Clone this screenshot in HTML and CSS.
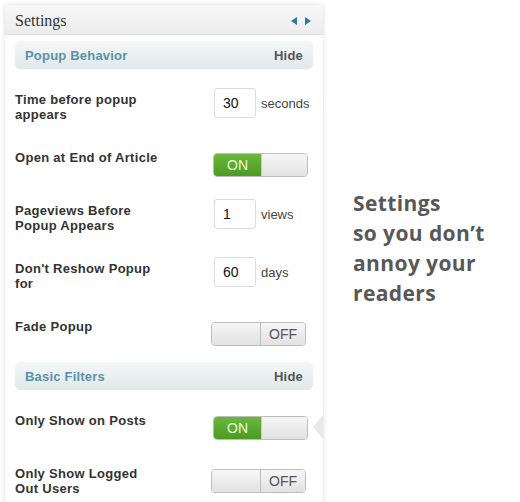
FILE: index.html
```html
<!DOCTYPE html>
<html lang='en'>
<head>
	<meta charset='UTF-8'>
	<title>Settings</title>
	<link rel="stylesheet" href="styles.css">
</head>
<body>
	<div class='page'>
		<div class='panel'>
			<div class='panel-head'>
				<span class='panel-title'>Settings</span>
				<span class='panel-arrows'>
					<svg width='20' height='8' viewBox='0 0 20 8'>
						<polygon points='0,4 6,0 6,8' fill='#2a7ca4'/>
						<polygon points='20,4 14,0 14,8' fill='#2a7ca4'/>
					</svg>
				</span>
			</div>
			<div class='panel-body'>
				<div class='section'>
					<div class='section-head'><span>Popup Behavior</span><span class='hide'>Hide</span></div>
					<div class='row row-input'>
						<div class='label'>Time before popup appears</div>
						<input class='num' type='text' value='30'><span class='unit'>seconds</span>
					</div>
					<div class='row'>
						<div class='label'>Open at End of Article</div>
						<div class='toggle on'><span class='t-on'>ON</span><span class='t-knob'></span></div>
					</div>
					<div class='row row-input'>
						<div class='label'>Pageviews Before Popup Appears</div>
						<input class='num' type='text' value='1'><span class='unit'>views</span>
					</div>
					<div class='row row-input'>
						<div class='label'>Don't Reshow Popup for</div>
						<input class='num' type='text' value='60'><span class='unit'>days</span>
					</div>
					<div class='row'>
						<div class='label'>Fade Popup</div>
						<div class='toggle off'><span class='t-knob'></span><span class='t-off'>OFF</span></div>
					</div>
				</div>
				<div class='section'>
					<div class='section-head'><span>Basic Filters</span><span class='hide'>Hide</span></div>
					<div class='row'>
						<div class='label'>Only Show on Posts</div>
						<div class='toggle on'><span class='t-on'>ON</span><span class='t-knob'></span></div>
						<div class='pointer'></div>
					</div>
					<div class='row'>
						<div class='label'>Only Show Logged Out Users</div>
						<div class='toggle off'><span class='t-knob'></span><span class='t-off'>OFF</span></div>
					</div>
				</div>
			</div>
		</div>
		<div class='blurb'>Settings<br>so you don’t<br>annoy your<br>readers</div>
	</div>
</body>
</html>
```

FILE: styles.css
```css
html, body{
	margin:0;
	background:#fff;
	font-family:"Liberation Sans", Arial, sans-serif;
}
.page{
	display:flex;
	align-items:flex-start;
	height:502px;
	overflow:hidden;
}
.panel{
	width:318px;
	margin:5px 0 0 5px;
	background:#fff;
	border-radius:4px 4px 0 0;
	box-shadow:0 0 5px rgba(0,0,0,.16);
}
.panel-head{
	display:flex;
	align-items:center;
	justify-content:space-between;
	height:29px;
	padding:0 12px 0 10px;
	background:linear-gradient(#f8f8f8, #ececec);
	border-bottom:1px solid #dcdcdc;
	border-radius:4px 4px 0 0;
}
.panel-title{
	font-family:"Liberation Serif", "Times New Roman", serif;
	font-size:16px;
	color:#333;
	padding-top:2px;
}
.panel-arrows{
	display:flex;
	padding-top:2px;
}
.panel-body{
	position:relative;
	padding:6px 10px 0 10px;
}
.section-head{
	display:flex;
	align-items:center;
	justify-content:space-between;
	height:28px;
	padding:0 10px;
	border-radius:5px;
	background:linear-gradient(#f4f7f8, #dfe8eb);
	font-size:13px;
	font-weight:bold;
	letter-spacing:.2px;
	color:#5b92a9;
	margin-bottom:19px;
}
.section-head .hide{
	color:#555;
}
.row{
	position:relative;
	display:flex;
	align-items:flex-start;
	margin-bottom:22px;
}
.row-input{
	min-height:36px;
}
.section .row:last-child{
	margin-bottom:16px;
}
.label{
	width:145px;
	margin-right:54px;
	padding-top:4px;
	font-size:13px;
	font-weight:bold;
	letter-spacing:.3px;
	line-height:15px;
	color:#333;
}
.label + .num{
	margin-top:0;
}
.num{
	box-sizing:border-box;
	width:42px;
	height:30px;
	margin:0;
	padding:0 0 0 8px;
	border:1px solid #dcdcdc;
	border-radius:3px;
	font-family:inherit;
	font-size:14px;
	color:#111;
}
.unit{
	margin:8px 0 0 5px;
	font-size:13px;
	color:#444;
}
.toggle{
	display:flex;
	box-sizing:border-box;
	width:95px;
	height:24px;
	margin-top:7px;
	border:1px solid #bdbdbd;
	border-radius:4px;
	overflow:hidden;
	font-size:14px;
	line-height:22px;
}
.toggle.on{
	margin-left:-1px;
}
.toggle.off{
	margin-left:-3px;
}
.t-on{
	width:47px;
	text-align:center;
	color:#eef8dc;
	background:linear-gradient(#6bb83d, #4b9a22);
}
.t-knob{
	flex:1;
	background:linear-gradient(#f6f6f6, #e2e2e2);
}
.toggle.on .t-knob{
	border-left:1px solid #c9c9c9;
}
.toggle.off .t-knob{
	flex:0 0 48px;
	border-right:1px solid #bdbdbd;
}
.t-off{
	flex:1;
	text-align:center;
	color:#555;
	background:linear-gradient(#f6f6f6, #e2e2e2);
}
.pointer{
	position:absolute;
	right:-10px;
	top:6px;
	width:0;
	height:0;
	border-top:12px solid transparent;
	border-bottom:12px solid transparent;
	border-right:10px solid #e9e9e9;
}
.blurb{
	margin:188px 0 0 30px;
	font-family:"Open Sans", sans-serif;
	font-size:21px;
	font-weight:bold;
	letter-spacing:.4px;
	line-height:30px;
	color:#585858;
}
```
